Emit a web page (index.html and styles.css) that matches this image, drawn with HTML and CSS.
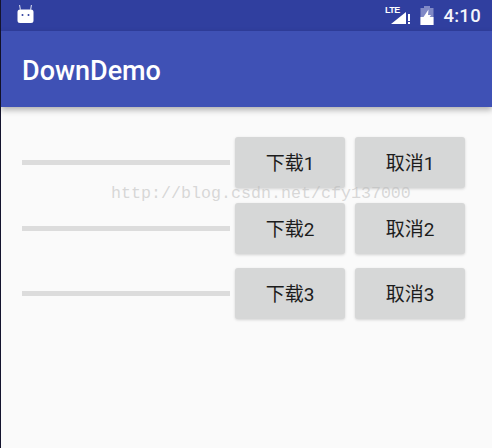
FILE: index.html
```html
<!DOCTYPE html>
<html lang="zh">
<head>
<meta charset="utf-8">
<title>DownDemo</title>
<link rel="stylesheet" href="styles.css">
</head>
<body>
<div class="screen">
  <header class="status">
    <svg class="droid" width="17" height="31" viewBox="0 0 17 31">
      <path class="white" d="M0.500 12a2.500 2.500 0 0 1 2.500-2.500h11a2.500 2.500 0 0 1 2.500 2.500v8.500a2.500 2.500 0 0 1-2.500 2.500H3a2.500 2.500 0 0 1-2.500-2.500z"/>
      <path class="antenna" d="M3.500 10L2.500 5M13.500 10l1-5"/>
      <circle class="eye" cx="5.500" cy="15" r="1"/>
      <circle class="eye" cx="11.500" cy="15" r="1"/>
    </svg>
    <span class="status-right">
      <svg width="26" height="31" viewBox="0 0 26 31">
        <text class="lte" x="0" y="13">LTE</text>
        <path class="white" d="M6 24L21 12v12z"/>
        <path class="white" d="M23 14h2v7h-2zM23 22h2v2h-2z"/>
      </svg>
      <svg width="14" height="31" viewBox="0 0 14 31">
        <path class="dim" d="M4 6h6v2h3.500v17H0.500V8H4z"/>
        <path class="white" d="M0.500 17h13v8H0.500z"/>
        <path class="white" d="M8.500 9.500L3.500 17h3L5.500 23l5.500-8H8z"/>
      </svg>
      <span class="time">4:10</span>
    </span>
  </header>
  <div class="appbar">DownDemo</div>
  <main class="content">
    <div class="row">
      <div class="bar"></div>
      <button class="btn">下载1</button>
      <button class="btn">取消1</button>
    </div>
    <div class="row">
      <div class="bar"></div>
      <button class="btn">下载2</button>
      <button class="btn">取消2</button>
    </div>
    <div class="row">
      <div class="bar"></div>
      <button class="btn">下载3</button>
      <button class="btn">取消3</button>
    </div>
    <div class="watermark">http://blog.csdn.net/cfy137000</div>
  </main>
</div>
</body>
</html>
```
FILE: styles.css
```css
html, body {
  margin: 0;
  padding: 0;
}
body {
  width: 492px;
  height: 448px;
  overflow: hidden;
  background: #fafafa;
  font-family: Roboto, "Noto Sans CJK SC", sans-serif;
}
.screen {
  display: flex;
  flex-direction: column;
  height: 448px;
  border-left: 1px solid #14142e;
  box-sizing: border-box;
}
.status {
  height: 31px;
  background: #303f9f;
  display: flex;
  align-items: center;
  justify-content: space-between;
  padding: 0 11px 0 16px;
  color: #fff;
  flex: none;
}
.droid { display: block; }
.white { fill: #fff; }
.dim { fill: #8089c6; }
.eye { fill: #303f9f; }
.antenna { stroke: #c9cde8; stroke-width: 1.2; fill: none; }
.lte {
  fill: #fff;
  font-family: "Liberation Sans", sans-serif;
  font-size: 9px;
  font-weight: 700;
  letter-spacing: -0.5px;
}
.status-right {
  display: flex;
  align-items: center;
  gap: 9px;
}
.status-right svg { display: block; }
.time {
  font-size: 18.500px;
  font-weight: 500;
  letter-spacing: 0.3px;
  color: #f4f5fb;
}
.appbar {
  height: 76px;
  box-sizing: border-box;
  padding: 3px 0 0 21px;
  background: #3f51b5;
  color: #fff;
  font-size: 27px;
  font-weight: 500;
  display: flex;
  align-items: center;
  box-shadow: 0 3px 6px rgba(0, 0, 0, 0.3);
  flex: none;
  position: relative;
  z-index: 1;
}
.content {
  position: relative;
  flex: 1;
  padding: 30px 26px 0 21px;
  display: flex;
  flex-direction: column;
  gap: 14.500px;
}
.row {
  display: flex;
  align-items: center;
  height: 51px;
}
.bar {
  width: 208px;
  height: 5px;
  margin-right: 5px;
  background: #dcdcdc;
  flex: none;
}
.btn {
  width: 110px;
  height: 51px;
  margin: 0 10px 0 0;
  padding: 0 0 2px;
  border: 0;
  border-radius: 3px;
  background: #d6d7d7;
  color: #1c1c1c;
  font-family: Roboto, "Noto Sans CJK SC", sans-serif;
  font-size: 19px;
  box-shadow: 0 1px 3px rgba(0, 0, 0, 0.16);
  flex: none;
}
.btn:last-child { margin-right: 0; }
.watermark {
  position: absolute;
  left: 110px;
  top: 77px;
  font-family: "Liberation Mono", monospace;
  font-size: 16.670px;
  line-height: 20px;
  color: rgba(185, 185, 185, 0.55);
  white-space: nowrap;
}
```
